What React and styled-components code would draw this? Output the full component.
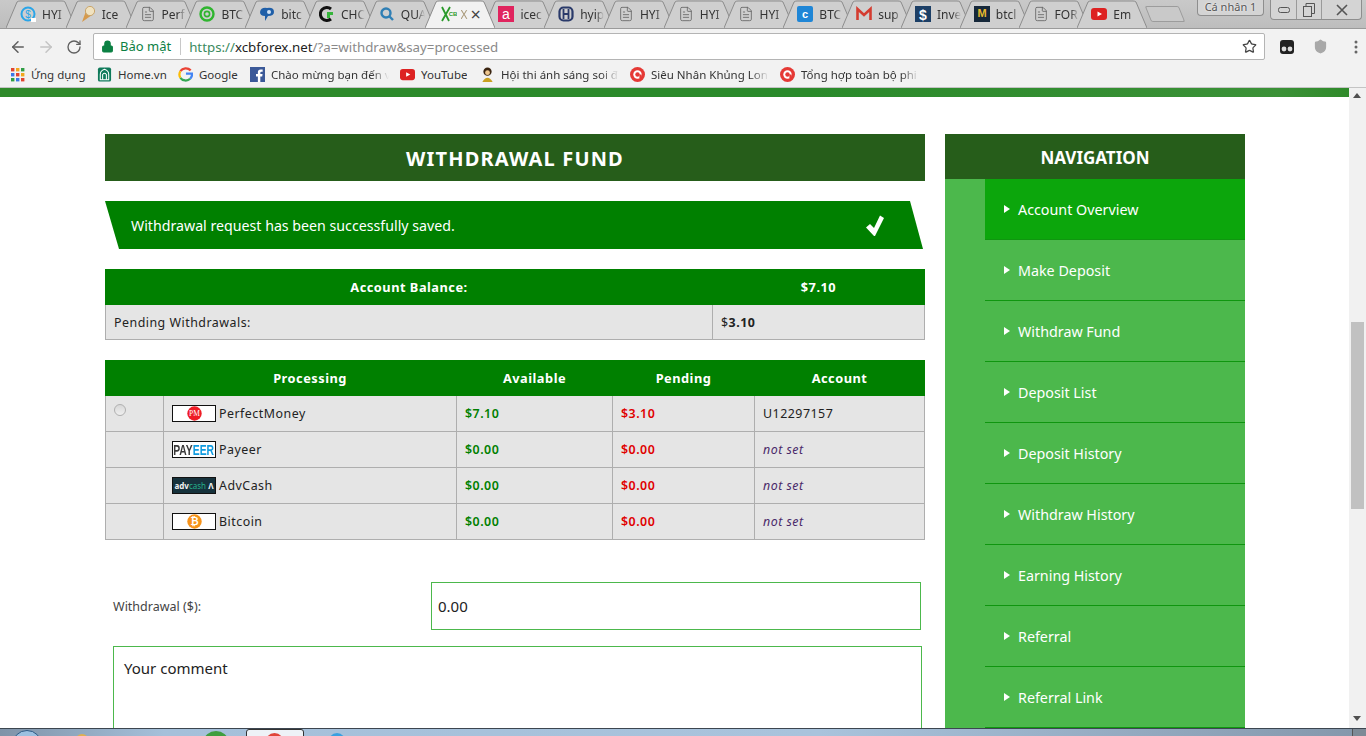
import React from "react";
import styled, { createGlobalStyle } from "styled-components";
import { ArrowLeft, ArrowRight, RotateCw, Lock, Star, FileText, Shield } from "lucide-react";

const GlobalStyle = createGlobalStyle`
  html, body { margin: 0; padding: 0; overflow: hidden; background: #fff; }
  * { box-sizing: border-box; }
`;

const Screen = styled.div`
  width: 1366px;
  height: 736px;
  display: flex;
  flex-direction: column;
  overflow: hidden;
  font-family: "Noto Sans", sans-serif;
`;

/* browser chrome */
const TabStrip = styled.div`
  position: relative;
  height: 29px;
  flex: none;
  display: flex;
  padding-left: 6px;
  background: linear-gradient(#c9c9c9, #bdbdbd);
  border-bottom: 1px solid #9a9a9a;
  overflow: hidden;
`;
const Tab = styled.div`
  position: relative;
  flex: none;
  width: ${(p) => p.$w}px;
  height: 28px;
  z-index: ${(p) => (p.$active ? 2 : 1)};
`;
const TabShape = styled.svg`
  position: absolute;
  left: 0;
  top: 0;
`;
const TabIcon = styled.span`
  position: absolute;
  left: ${(p) => (p.$active ? 16 : 14)}px;
  top: 6px;
  width: 16px;
  height: 16px;
  display: flex;
`;
const TabText = styled.span`
  position: absolute;
  left: 36px;
  top: 6px;
  width: ${(p) => (p.$active ? 8 : 24)}px;
  overflow: hidden;
  white-space: nowrap;
  font-size: 12px;
  line-height: 17px;
  color: ${(p) => (p.$active ? "#a89878" : "#333")};
  mask-image: linear-gradient(to right, #000 65%, transparent);
`;
const TabClose = styled.span`
  position: absolute;
  left: 46px;
  top: 5px;
  font-size: 18px;
  line-height: 18px;
  color: #444;
`;
const NewTab = styled.div`
  position: relative;
  flex: none;
  margin: 6px 0 0 12px;
  width: 34px;
  height: 16px;
  transform: skewX(22deg);
  border: 1px solid #9c9c9c;
  border-radius: 2px;
  background: #c9c9c9;
`;
const ProfileBadge = styled.div`
  position: absolute;
  left: 1197px;
  top: 0;
  width: 67px;
  height: 16px;
  border: 1px solid #8e8e8e;
  border-top: none;
  border-radius: 0 0 4px 4px;
  background: #d4d4d4;
  font-size: 11px;
  line-height: 14px;
  text-align: center;
  color: #555;
  text-shadow: 0 0 2px #fff;
`;
const WindowButtons = styled.div`
  position: absolute;
  left: 1270px;
  top: 0;
  height: 20px;
  display: flex;
  border: 1px solid #8e8e8e;
  border-top: none;
  border-radius: 0 0 4px 4px;
  background: #d4d4d4;
`;
const WindowButton = styled.div`
  width: ${(p) => p.$w}px;
  display: flex;
  align-items: center;
  justify-content: center;
  border-left: ${(p) => (p.$first ? "none" : "1px solid #9a9a9a")};
  color: #555;
`;

const Toolbar = styled.div`
  height: 33px;
  flex: none;
  display: flex;
  align-items: center;
  padding: 2px 0 0 2px;
  background: #f2f2f2;
`;
const NavIcon = styled.span`
  width: ${(p) => p.$w || 28}px;
  flex: none;
  display: flex;
  justify-content: center;
  color: ${(p) => p.$color || "#5f5f5f"};
`;
const Omnibox = styled.div`
  margin-left: 3px;
  width: 1172px;
  height: 27px;
  flex: none;
  display: flex;
  align-items: center;
  padding: 0 7px;
  background: #fff;
  border: 1px solid #b4b4b4;
  border-radius: 2px;
  font-size: 14px;
`;
const Secure = styled.span`
  margin-left: 6px;
  padding-right: 9px;
  border-right: 1px solid #c8c8c8;
  color: #0b8043;
  font-size: 13px;
  line-height: 17px;
`;
const Url = styled.span`
  margin-left: 8px;
  flex: 1;
  color: #8a8a8a;
  font-size: 13.3px;
  b { font-weight: 400; color: #222; }
  i { font-style: normal; color: #3a8a60; }
`;
const Bookmarks = styled.div`
  height: 26px;
  flex: none;
  display: flex;
  align-items: center;
  padding-left: 11px;
  background: #f2f2f2;
  border-bottom: 1px solid #c4c4c4;
`;
const Bookmark = styled.div`
  width: ${(p) => p.$w}px;
  flex: none;
  display: flex;
  align-items: center;
  gap: 6px;
  font-size: 11.5px;
  color: #333;
  white-space: nowrap;
`;
const BookmarkLabel = styled.span`
  width: ${(p) => (p.$clip ? "118px" : "auto")};
  overflow: hidden;
  ${(p) => p.$clip && "mask-image: linear-gradient(to right, #000 85%, transparent);"}
`;

/* page */
const Viewport = styled.div`
  flex: 1;
  min-height: 0;
  display: flex;
  overflow: hidden;
`;
const Page = styled.div`
  flex: 1;
  min-width: 0;
  overflow: hidden;
`;
const HeroEdge = styled.div`
  height: 9px;
  background: linear-gradient(to right, #2f8a2a, #2a8a2a 60%, #3b9137 95%, #2f8a2a);
`;
const Content = styled.div`
  display: flex;
  gap: 20px;
  padding: 37px 0 0 105px;
`;
const Main = styled.main`
  width: 820px;
  flex: none;
`;
const Title = styled.h1`
  margin: 0;
  height: 47px;
  background: #265d1a;
  color: #fff;
  font-size: 20px;
  font-weight: 700;
  letter-spacing: 1.15px;
  line-height: 49px;
  text-align: center;
`;
const Alert = styled.div`
  margin-top: 20px;
  width: 818px;
  height: 48px;
  display: flex;
  align-items: center;
  justify-content: space-between;
  padding: 0 39px 0 26px;
  background: #008000;
  clip-path: polygon(0 0, 805px 0, 818px 100%, 14px 100%);
  color: #fff;
  font-size: 14.2px;
`;
const Table = styled.table`
  margin-top: ${(p) => p.$top}px;
  width: 819px;
  table-layout: fixed;
  border-collapse: collapse;
  font-size: 12.4px;
  letter-spacing: 0.5px;
  color: #222;
`;
const Th = styled.th`
  height: 35px;
  padding: 0;
  background: #008000;
  border: 1px solid #008000;
  color: #fff;
  font-size: 12.8px;
  font-weight: 700;
  text-align: center;
`;
const Td = styled.td`
  height: ${(p) => p.$h || 36}px;
  padding: 0 8px;
  background: #e5e5e5;
  border: 1px solid #aeaeae;
  color: ${(p) => p.$color || "#222"};
  font-style: ${(p) => (p.$italic ? "italic" : "normal")};
  font-weight: ${(p) => (p.$bold ? 600 : 400)};
`;
const RadioCell = styled(Td)`
  vertical-align: top;
  padding-top: 8px;
`;
const Radio = styled.input`
  appearance: none;
  display: block;
  margin: 0;
  width: 12px;
  height: 12px;
  border: 1px solid #b0b0b0;
  border-radius: 50%;
  background: linear-gradient(#d8d8d8, #efefef);
`;
const System = styled.div`
  display: flex;
  align-items: center;
  gap: 3px;
`;
const LogoBox = styled.span`
  width: 44px;
  height: 17px;
  flex: none;
  display: flex;
  align-items: center;
  justify-content: center;
  border: 1px solid #111;
  background: ${(p) => p.$bg || "#fff"};
  overflow: hidden;
  letter-spacing: 0;
`;
const PayeerLogo = styled.span`
  flex: none;
  display: inline-block;
  font-family: "Liberation Sans", sans-serif;
  font-size: 14px;
  font-weight: 700;
  transform: scaleX(0.74);
  color: #3a3a3a;
  span { color: #0f9be0; }
`;
const AdvLogo = styled.span`
  font-size: 8px;
  font-weight: 700;
  color: #f0f0f0;
  white-space: nowrap;
  span { color: #25b08a; font-weight: 400; }
`;
const FormRow = styled.div`
  margin-top: 42px;
  padding-left: 8px;
  display: flex;
  align-items: center;
`;
const FieldLabel = styled.label`
  width: 318px;
  flex: none;
  font-size: 12.5px;
  color: #444;
`;
const AmountInput = styled.div`
  width: 490px;
  height: 48px;
  display: flex;
  align-items: center;
  padding-left: 6px;
  border: 1px solid #4cb84c;
  font-size: 15px;
  color: #222;
`;
const Comment = styled.div`
  margin: 16px 0 0 8px;
  width: 809px;
  height: 160px;
  padding: 11px 10px;
  border: 1px solid #4cb84c;
  font-size: 15px;
  color: #222;
`;

/* sidebar */
const Side = styled.aside`
  width: 300px;
  flex: none;
  background: #4cb84c;
`;
const SideTitle = styled.h2`
  margin: 0;
  height: 45px;
  background: #265d1a;
  color: #fff;
  font-size: 17px;
  font-weight: 700;
  line-height: 47px;
  text-align: center;
`;
const NavList = styled.ul`
  margin: 0;
  padding: 0 0 0 40px;
  list-style: none;
`;
const NavItem = styled.li`
  height: 61px;
  display: flex;
  align-items: center;
  gap: 8px;
  padding-left: 19px;
  background: ${(p) => (p.$active ? "#0ca60c" : "transparent")};
  border-bottom: 1px solid #0f960f;
  color: #fff;
  font-size: 14.3px;
`;
const Caret = styled.span`
  width: 0;
  height: 0;
  border-left: 6px solid #fff;
  border-top: 4.5px solid transparent;
  border-bottom: 4.5px solid transparent;
`;

const Scrollbar = styled.div`
  position: relative;
  width: 17px;
  flex: none;
  background: #f1f1f1;
`;
const ScrollThumb = styled.div`
  position: absolute;
  left: 2px;
  top: 234px;
  width: 13px;
  height: 187px;
  background: #c1c1c1;
`;
const ScrollArrow = styled.span`
  position: absolute;
  left: 4px;
  ${(p) => (p.$down ? "bottom: 7px;" : "top: 5px;")}
  width: 0;
  height: 0;
  border-left: 4px solid transparent;
  border-right: 4px solid transparent;
  ${(p) => (p.$down ? "border-top: 5px solid #505050;" : "border-bottom: 5px solid #505050;")}
`;

/* windows taskbar, only its top edge is in the picture */
const Taskbar = styled.div`
  position: relative;
  height: 8px;
  flex: none;
  border-top: 1px solid #3c4650;
  background: linear-gradient(to right, #7f93a8, #a5c0da 12%, #a9c3dc 60%, #8497ab);
  overflow: hidden;
`;
const StartOrb = styled.span`
  position: absolute;
  left: 12px;
  top: 1px;
  width: 30px;
  height: 30px;
  border: 1px solid #2d5a85;
  border-radius: 50%;
  background: #9cc0e0;
`;
const TaskSlot = styled.span`
  position: absolute;
  left: ${(p) => p.$x}px;
  top: ${(p) => p.$y}px;
  width: ${(p) => p.$w}px;
  height: 20px;
  border: ${(p) => (p.$frame ? "1px solid #333" : "none")};
  border-radius: ${(p) => (p.$frame ? "3px" : "50%")};
  background: ${(p) => p.$bg};
`;
const ShowDesktop = styled.span`
  position: absolute;
  right: 0;
  top: 0;
  width: 14px;
  height: 8px;
  border-left: 1px solid #555;
  background: #7d8a96;
`;

const Favicon = ({ kind, size = 16 }) => {
  switch (kind) {
    case "hyipS":
      return (
        <svg width={size} height={size} viewBox="0 0 16 16">
          <circle cx="8" cy="8" r="6.5" fill="none" stroke="#2aa5e8" strokeWidth="2" />
          <text x="8" y="12" fontSize="10" fontFamily="Liberation Sans" fill="#2aa5e8" textAnchor="middle">$</text>
          <rect x="11" y="12" width="5" height="4" fill="#fff" />
        </svg>
      );
    case "ice":
      return (
        <svg width={size} height={size} viewBox="0 0 16 16">
          <path d="M2 16 L6 5 L12 9 Z" fill="#d69a4c" />
          <circle cx="10" cy="5" r="4.6" fill="#f0e2c0" stroke="#c9a56a" />
        </svg>
      );
    case "btcRing":
      return (
        <svg width={size} height={size} viewBox="0 0 16 16">
          <circle cx="8" cy="8" r="6.5" fill="none" stroke="#2fb52f" strokeWidth="2.4" />
          <circle cx="8" cy="8" r="2.6" fill="none" stroke="#2fb52f" strokeWidth="1.6" />
        </svg>
      );
    case "bitco":
      return (
        <svg width={size} height={size} viewBox="0 0 16 16">
          <path d="M1 6 Q2 1 8 2 Q15 1 15 6 Q15 10 9 10 L6 15 L6 10 Q1 10 1 6 Z" fill="#1f5fa8" />
          <circle cx="10" cy="6" r="2" fill="#cfe2f5" />
        </svg>
      );
    case "cho":
      return (
        <svg width={size} height={size} viewBox="0 0 16 16">
          <path d="M12 3 A6.5 6.5 0 1 0 12 13" fill="none" stroke="#111" strokeWidth="3" />
          <path d="M8 6 h6 v3 h-3 v3 h-3 Z" fill="#35b53a" />
        </svg>
      );
    case "qua":
      return (
        <svg width={size} height={size} viewBox="0 0 16 16">
          <circle cx="7" cy="7" r="4.5" fill="none" stroke="#2f7fb5" strokeWidth="2.4" />
          <path d="M10 10 L14 14" stroke="#2f7fb5" strokeWidth="2.4" />
        </svg>
      );
    case "xcb":
      return (
        <svg width={size} height={size} viewBox="0 0 16 16">
          <path d="M1 1 L8 15 M9 1 L1 15" stroke="#2a9a2a" strokeWidth="1.8" fill="none" />
          <text x="12" y="10" fontSize="6" fontWeight="700" fontFamily="Liberation Sans" fill="#2a9a2a" textAnchor="middle">CB</text>
        </svg>
      );
    case "icec":
      return (
        <svg width={size} height={size} viewBox="0 0 16 16">
          <rect width="16" height="16" fill="#e0245e" />
          <text x="8" y="13" fontSize="14" fontFamily="Liberation Sans" fill="#fff" textAnchor="middle">a</text>
        </svg>
      );
    case "hyipH":
      return (
        <svg width={size} height={size} viewBox="0 0 16 16">
          <rect x="1.5" y="1.5" width="13" height="13" rx="4" fill="none" stroke="#2a3a6a" strokeWidth="2.2" />
          <path d="M5.5 3 V13 M10.5 3 V13 M5.5 8 H10.5" stroke="#2a3a6a" strokeWidth="1.8" />
        </svg>
      );
    case "btcC":
      return (
        <svg width={size} height={size} viewBox="0 0 16 16">
          <rect width="16" height="16" rx="2" fill="#1f86d6" />
          <text x="8" y="12" fontSize="11" fontWeight="700" fontFamily="Liberation Sans" fill="#fff" textAnchor="middle">c</text>
        </svg>
      );
    case "gmail":
      return (
        <svg width={size} height={size} viewBox="0 0 16 16">
          <path d="M1.5 14 V3 L8 9 L14.5 3 V14" fill="none" stroke="#d43c30" strokeWidth="2.6" />
        </svg>
      );
    case "invest":
      return (
        <svg width={size} height={size} viewBox="0 0 16 16">
          <rect width="16" height="16" fill="#1c3f66" />
          <text x="8" y="13.5" fontSize="14" fontWeight="700" fontFamily="Liberation Sans" fill="#fff" textAnchor="middle">$</text>
        </svg>
      );
    case "btcl":
      return (
        <svg width={size} height={size} viewBox="0 0 16 16">
          <rect width="16" height="16" fill="#16283a" />
          <text x="8" y="11" fontSize="11" fontWeight="700" fontFamily="Liberation Sans" fill="#e8b92e" textAnchor="middle">M</text>
        </svg>
      );
    case "youtube":
      return (
        <svg width={size} height={size} viewBox="0 0 16 16">
          <rect y="2" width="16" height="12" rx="3" fill="#dd2222" />
          <path d="M6.5 5.5 L11 8 L6.5 10.5 Z" fill="#fff" />
        </svg>
      );
    case "apps":
      return (
        <svg width={size} height={size} viewBox="0 0 14 14">
          {[0, 5, 10].map((y, r) =>
            [0, 5, 10].map((x, c) => (
              <rect
                key={`${r}${c}`}
                x={x}
                y={y}
                width="3.4"
                height="3.4"
                fill={["#e0452f", "#f2a81d", "#2f9e44", "#3b78e7", "#e0452f", "#f2a81d", "#2f9e44", "#3b78e7", "#e0452f"][r * 3 + c]}
              />
            ))
          )}
        </svg>
      );
    case "home":
      return (
        <svg width={size} height={size} viewBox="0 0 16 16">
          <rect x="1" y="0.5" width="14" height="15" rx="2" fill="#0f7a5a" />
          <path d="M8 2.5 Q12.5 4 12.5 8 V13.5 H3.5 V8 Q3.5 4 8 2.5 Z" fill="none" stroke="#fff" strokeWidth="1.1" />
          <path d="M6 13.5 V8 Q8 5.5 10 8 V13.5" fill="none" stroke="#fff" strokeWidth="1.1" />
        </svg>
      );
    case "google":
      return (
        <svg width={size} height={size} viewBox="0 0 16 16">
          <path d="M13.5 3.6 A7 7 0 0 0 2.5 4.5" fill="none" stroke="#ea4335" strokeWidth="2.4" />
          <path d="M2.5 4.5 A7 7 0 0 0 2.5 11.5" fill="none" stroke="#fbbc05" strokeWidth="2.4" />
          <path d="M2.5 11.5 A7 7 0 0 0 13 12.5" fill="none" stroke="#34a853" strokeWidth="2.4" />
          <path d="M13 12.5 A7 7 0 0 0 15 7 H8.5" fill="none" stroke="#4285f4" strokeWidth="2.4" />
        </svg>
      );
    case "facebook":
      return (
        <svg width={size} height={size} viewBox="0 0 16 16">
          <rect width="16" height="16" fill="#3b5998" />
          <path d="M11 16 V10 H13 L13.4 7.4 H11 V6 Q11 5 12 5 H13.5 V2.6 H11.4 Q8.4 2.6 8.4 5.6 V7.4 H6.4 V10 H8.4 V16 Z" fill="#fff" />
        </svg>
      );
    case "monkey":
      return (
        <svg width={size} height={size} viewBox="0 0 16 16">
          <circle cx="8" cy="5" r="4.4" fill="#3a2410" />
          <circle cx="8" cy="6" r="2.6" fill="#f0c890" />
          <path d="M2.5 16 Q8 7 13.5 16 Z" fill="#c9a020" />
        </svg>
      );
    case "target":
      return (
        <svg width={size} height={size} viewBox="0 0 16 16">
          <circle cx="8" cy="8" r="8" fill="#e53935" />
          <circle cx="8" cy="8" r="4.5" fill="#fff" />
          <circle cx="8" cy="8" r="2.4" fill="#e53935" />
          <rect x="10" y="8" width="2.4" height="4" fill="#e53935" />
        </svg>
      );
    default:
      return <FileText size={size} color="#666" strokeWidth={1.3} />;
  }
};

const tabs = [
  ["hyipS", "HYI"], ["ice", "Ice"], ["doc", "Perf"], ["btcRing", "BTC"], ["bitco", "bitc"],
  ["cho", "CHC"], ["qua", "QUA"], ["xcb", "X", true], ["icec", "icec"], ["hyipH", "hyip"],
  ["doc", "HYI"], ["doc", "HYI"], ["doc", "HYI"], ["btcC", "BTC"], ["gmail", "sup"],
  ["invest", "Inve"], ["btcl", "btcl"], ["doc", "FOR"], ["youtube", "Em"],
];

const bookmarks = [
  ["apps", "Ứng dụng", 86], ["home", "Home.vn", 81], ["google", "Google", 72],
  ["facebook", "Chào mừng bạn đến v", 150, true], ["youtube", "YouTube", 80],
  ["monkey", "Hội thi ánh sáng soi đ", 150, true],
  ["target", "Siêu Nhân Khủng Lon", 150, true], ["target", "Tổng hợp toàn bộ phi", 150, true],
];

const navItems = [
  "Account Overview", "Make Deposit", "Withdraw Fund", "Deposit List", "Deposit History",
  "Withdraw History", "Earning History", "Referral", "Referral Link",
];

const processors = [
  {
    name: "PerfectMoney", available: "$7.10", pending: "$3.10", account: "U12297157", radio: true,
    logo: (
      <LogoBox>
        <svg width="15" height="15" viewBox="0 0 15 15">
          <circle cx="7.5" cy="7.5" r="7.2" fill="#ee1c25" />
          <text x="7.5" y="10.2" fontSize="7.5" fontFamily="Liberation Serif" fill="#fff" textAnchor="middle">PM</text>
        </svg>
      </LogoBox>
    ),
  },
  {
    name: "Payeer", available: "$0.00", pending: "$0.00",
    logo: <LogoBox><PayeerLogo>PAY<span>EER</span></PayeerLogo></LogoBox>,
  },
  {
    name: "AdvCash", available: "$0.00", pending: "$0.00",
    logo: <LogoBox $bg="#16323c"><AdvLogo>adv<span>cash</span> Λ</AdvLogo></LogoBox>,
  },
  {
    name: "Bitcoin", available: "$0.00", pending: "$0.00",
    logo: (
      <LogoBox>
        <svg width="15" height="15" viewBox="0 0 15 15">
          <circle cx="7.5" cy="7.5" r="7.2" fill="#f7931a" />
          <text x="7.5" y="11" fontSize="10" fontWeight="700" fontFamily="Liberation Sans" fill="#fff" textAnchor="middle">₿</text>
        </svg>
      </LogoBox>
    ),
  },
];

const App = () => {
  return (
    <Screen>
      <GlobalStyle />
      <TabStrip>
        {tabs.map(([kind, label, active], i) => (
          <Tab key={i} $active={active} $w={i < 13 ? 59.8 : 58.8}>
            <TabShape width="70" height="28" viewBox="0 0 70 28">
              <path
                d="M0 28 L11 2 Q12 1 14 1 L56 1 Q58 1 59 2 L70 28"
                fill={active ? "#f2f2f2" : "#cfcfcf"}
                stroke="#8d8d8d"
              />
            </TabShape>
            <TabIcon $active={active}><Favicon kind={kind} /></TabIcon>
            <TabText $active={active}>{label}</TabText>
            {active && <TabClose>×</TabClose>}
          </Tab>
        ))}
        <NewTab />
        <ProfileBadge>Cá nhân 1</ProfileBadge>
        <WindowButtons>
          <WindowButton $w={25} $first>
            <svg width="12" height="6" viewBox="0 0 12 6"><rect x="0.5" y="0.5" width="11" height="5" rx="2" fill="none" stroke="currentColor" /></svg>
          </WindowButton>
          <WindowButton $w={25}>
            <svg width="12" height="14" viewBox="0 0 12 14"><rect x="0.5" y="3.5" width="8" height="10" fill="none" stroke="currentColor" /><path d="M3 3 V0.5 H11.5 V10.5 H9" fill="none" stroke="currentColor" /></svg>
          </WindowButton>
          <WindowButton $w={40}>
            <svg width="12" height="12" viewBox="0 0 12 12"><path d="M1 1 L11 11 M11 1 L1 11" stroke="currentColor" strokeWidth="1.6" /></svg>
          </WindowButton>
        </WindowButtons>
      </TabStrip>

      <Toolbar>
        <NavIcon $w={32}><ArrowLeft size={18} /></NavIcon>
        <NavIcon $w={24} $color="#c4c4c4"><ArrowRight size={18} /></NavIcon>
        <NavIcon $w={32}><RotateCw size={16} /></NavIcon>
        <Omnibox>
          <Lock size={13} color="#0b8043" fill="#0b8043" />
          <Secure>Bảo mật</Secure>
          <Url><i>https://</i><b>xcbforex.net</b>/?a=withdraw&amp;say=processed</Url>
          <Star size={15} color="#444" />
        </Omnibox>
        <NavIcon $w={44}>
          <svg width="16" height="16" viewBox="0 0 16 16">
            <rect x="1" y="1" width="14" height="14" rx="3" fill="#222" />
            <circle cx="5" cy="10" r="2.4" fill="#ddd" />
            <circle cx="11" cy="10" r="2.4" fill="#ddd" />
          </svg>
        </NavIcon>
        <NavIcon $w={22} $color="#a8a8a8"><Shield size={15} fill="#a8a8a8" /></NavIcon>
        <NavIcon $w={50}>
          <svg width="4" height="16" viewBox="0 0 4 16"><circle cx="2" cy="3" r="1.5" fill="#666" /><circle cx="2" cy="8" r="1.5" fill="#666" /><circle cx="2" cy="13" r="1.5" fill="#666" /></svg>
        </NavIcon>
      </Toolbar>

      <Bookmarks>
        {bookmarks.map(([kind, label, w, clip], i) => (
          <Bookmark key={i} $w={w}>
            <Favicon kind={kind} size={kind === "apps" ? 14 : 15} />
            <BookmarkLabel $clip={clip}>{label}</BookmarkLabel>
          </Bookmark>
        ))}
      </Bookmarks>

      <Viewport>
        <Page>
          <HeroEdge />
          <Content>
            <Main>
              <Title>WITHDRAWAL FUND</Title>
              <Alert>
                Withdrawal request has been successfully saved.
                <svg width="18" height="21" viewBox="0 0 18 21">
                  <path d="M0 12.5 L4 9 L8 13 L14 0.5 L18 3 L9 21 L8 21 Z" fill="#fff" />
                </svg>
              </Alert>

              <Table $top={20}>
                <colgroup>
                  <col width="607" />
                  <col width="212" />
                </colgroup>
                <thead>
                  <tr>
                    <Th>Account Balance:</Th>
                    <Th>$7.10</Th>
                  </tr>
                </thead>
                <tbody>
                  <tr>
                    <Td $h={35}>Pending Withdrawals:</Td>
                    <Td $h={35}>$<b>3.10</b></Td>
                  </tr>
                </tbody>
              </Table>

              <Table $top={20}>
                <colgroup>
                  <col width="58" />
                  <col width="293" />
                  <col width="156" />
                  <col width="142" />
                  <col width="170" />
                </colgroup>
                <thead>
                  <tr>
                    <Th />
                    <Th>Processing</Th>
                    <Th>Available</Th>
                    <Th>Pending</Th>
                    <Th>Account</Th>
                  </tr>
                </thead>
                <tbody>
                  {processors.map((row) => (
                    <tr key={row.name}>
                      <RadioCell>{row.radio && <Radio type="radio" name="ec" />}</RadioCell>
                      <Td>
                        <System>{row.logo}{row.name}</System>
                      </Td>
                      <Td $color="#008000" $bold>{row.available}</Td>
                      <Td $color="#e00000" $bold>{row.pending}</Td>
                      {row.account ? <Td>{row.account}</Td> : <Td $color="#4a2a6a" $italic>not set</Td>}
                    </tr>
                  ))}
                </tbody>
              </Table>

              <FormRow>
                <FieldLabel>Withdrawal ($):</FieldLabel>
                <AmountInput>0.00</AmountInput>
              </FormRow>
              <Comment>Your comment</Comment>
            </Main>

            <Side>
              <SideTitle>NAVIGATION</SideTitle>
              <NavList>
                {navItems.map((item, i) => (
                  <NavItem key={item} $active={i === 0}>
                    <Caret />
                    {item}
                  </NavItem>
                ))}
              </NavList>
            </Side>
          </Content>
        </Page>
        <Scrollbar>
          <ScrollArrow />
          <ScrollThumb />
          <ScrollArrow $down />
        </Scrollbar>
      </Viewport>

      <Taskbar>
        <StartOrb />
        <TaskSlot $x={74} $y={5} $w={16} $bg="#e0b050" />
        <TaskSlot $x={204} $y={2} $w={24} $bg="#3f9e3f" />
        <TaskSlot $x={246} $y={0} $w={58} $bg="#eef2f7" $frame />
        <TaskSlot $x={265} $y={4} $w={19} $bg="#e0453a" />
        <TaskSlot $x={328} $y={4} $w={18} $bg="#3aa0e0" />
        <ShowDesktop />
      </Taskbar>
    </Screen>
  );
};

export default App;
